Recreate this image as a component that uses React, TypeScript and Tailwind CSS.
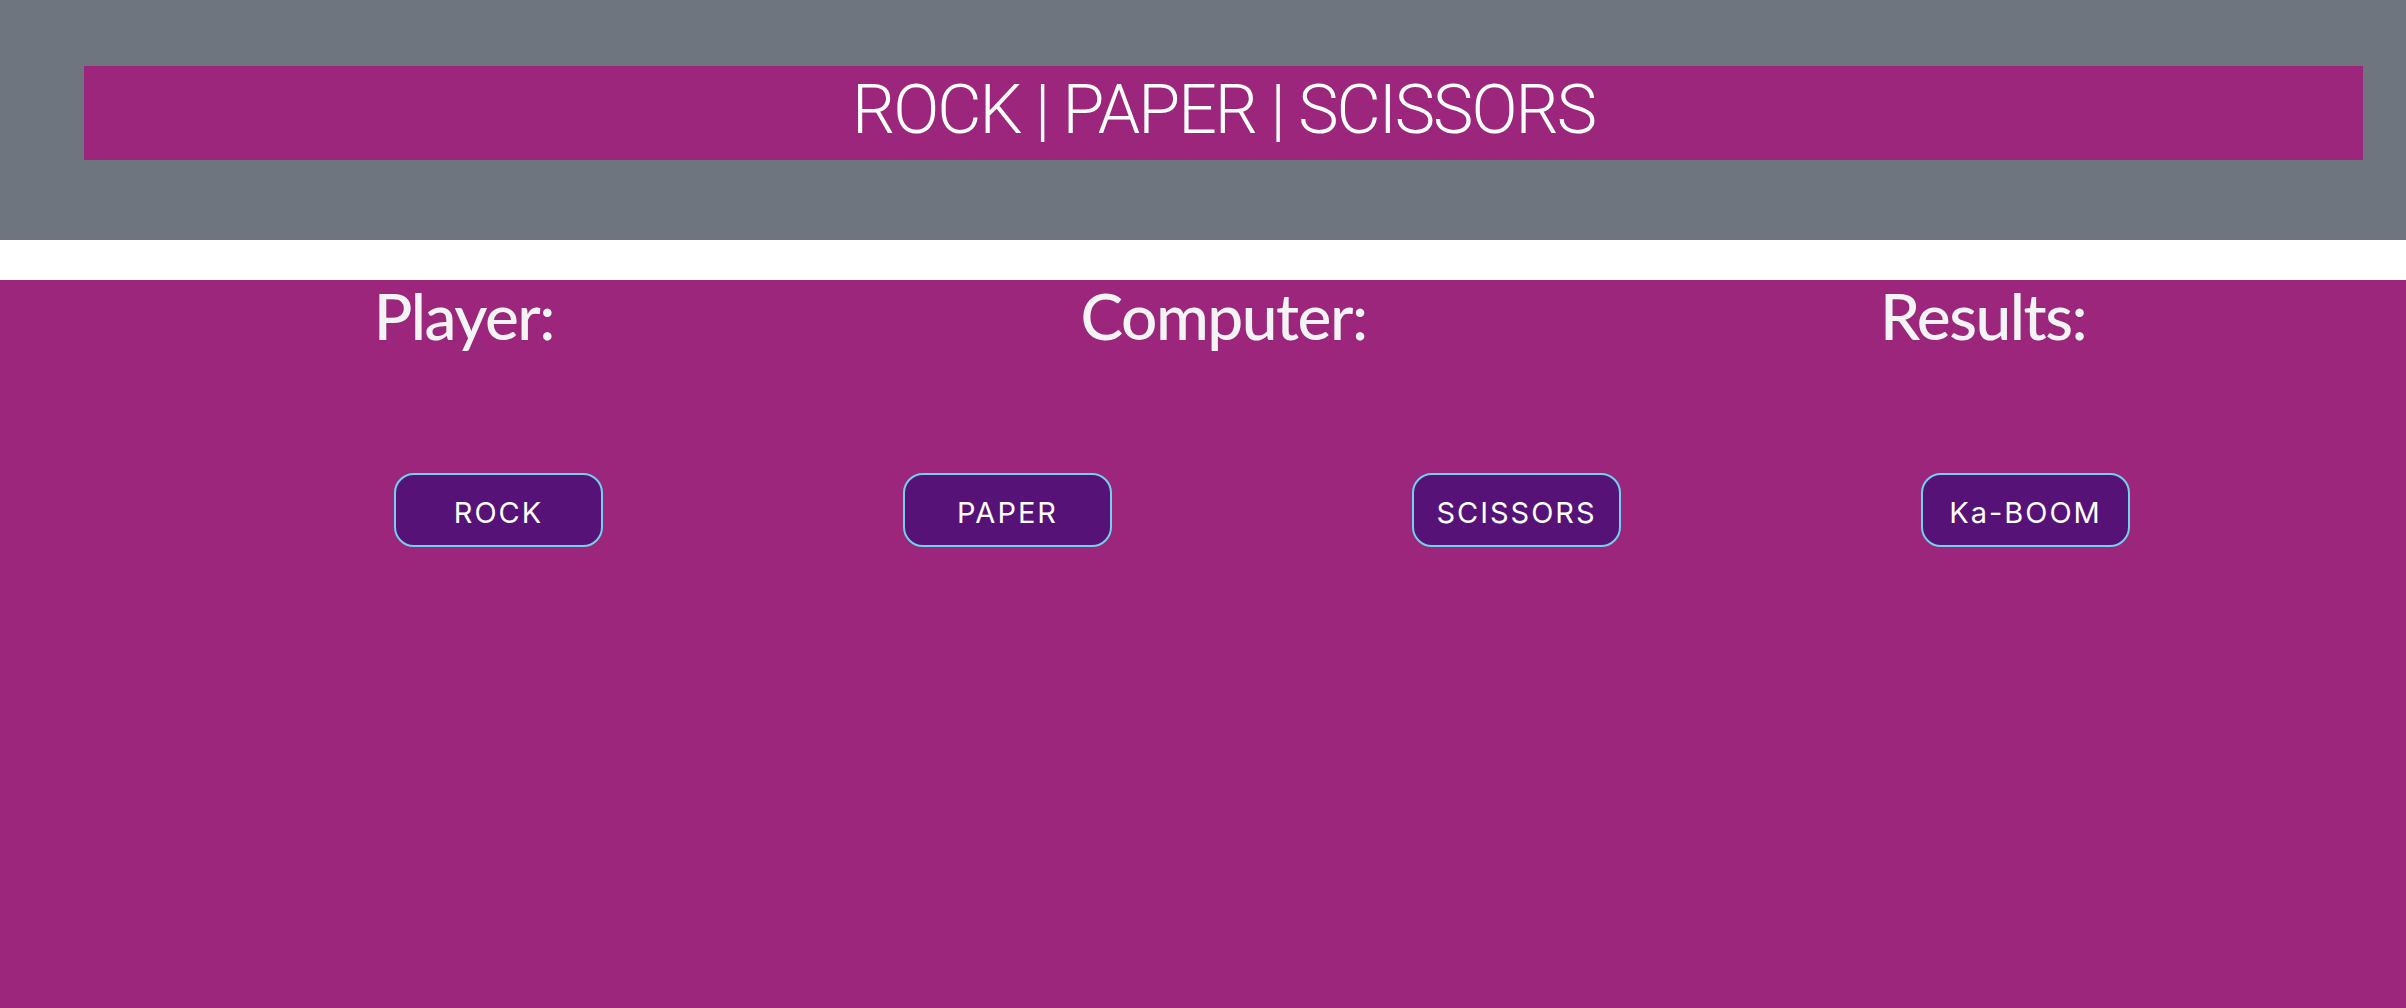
// App.tsx - rock paper scissors board
const choices = ['ROCK', 'PAPER', 'SCISSORS', 'Ka-BOOM'];

const App = () => {
  return (
    <div className="min-h-screen bg-[#9b267b]">
      {/* Header */}
      <header className="bg-[#6f757e] pt-[66px] pb-[80px]">
        <div className="ml-[84px] mr-[43px] h-[94px] bg-[#9b267b] flex items-center justify-center pb-[6px]">
          <h1 className="text-white text-[68px] font-light tracking-[-2px] font-['Roboto',sans-serif] leading-none">
            ROCK | PAPER | SCISSORS
          </h1>
        </div>
      </header>

      <div className="h-[40px] bg-white" />

      {/* Board */}
      <main className="pt-[4px]">
        <div className="ml-[84px] mr-[43px] grid grid-cols-3 text-center">
          <h2 className="text-[#f4f4f4] text-[64px] leading-[64px] font-['Lato',sans-serif] font-medium tracking-[-1.5px]">Player:</h2>
          <h2 className="text-[#f4f4f4] text-[64px] leading-[64px] font-['Lato',sans-serif] font-medium tracking-[-1.5px]">Computer:</h2>
          <h2 className="text-[#f4f4f4] text-[64px] leading-[64px] font-['Lato',sans-serif] font-medium tracking-[-1.5px]">Results:</h2>
        </div>

        <div className="flex pl-[394px] gap-[300px] mt-[125px]">
          {choices.map((c) => (
            <button
              key={c}
              className="w-[209px] h-[74px] rounded-[20px] border-2 border-[#6fd3ea] bg-[#561277] text-white text-[29px] tracking-[2px] font-['Inter',sans-serif] flex items-center justify-center pt-[5px]"
            >
              {c}
            </button>
          ))}
        </div>
      </main>
    </div>
  );
};

export default App;
